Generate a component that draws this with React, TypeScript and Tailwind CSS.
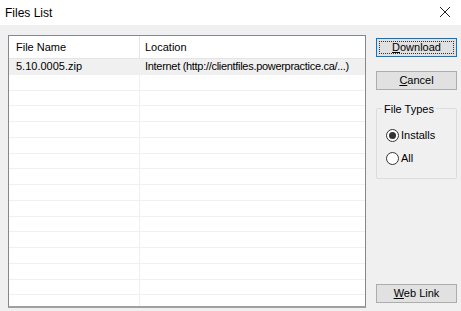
import React, { useState } from "react";

const rows = [
  { name: "5.10.0005.zip", location: "Internet (http://clientfiles.powerpractice.ca/...)" },
];

const EMPTY_ROWS = 15;

function Radio({ checked, label, onClick }: { checked: boolean; label: string; onClick: () => void }) {
  return (
    <div className="flex items-center gap-[2px] h-[23px] cursor-default" onClick={onClick}>
      <span className="w-[13px] h-[13px] rounded-full border border-[#333] bg-white flex items-center justify-center">
        {checked && <span className="w-[7px] h-[7px] rounded-full bg-[#333]" />}
      </span>
      <span>{label}</span>
    </div>
  );
}

export default function App() {
  const [fileType, setFileType] = useState<"installs" | "all">("installs");

  return (
    <div
      className="w-[461px] h-[311px] bg-[#f0f0f0] text-[11px] text-black flex flex-col overflow-hidden"
      style={{ fontFamily: "'Liberation Sans', Arial, sans-serif" }}
    >
      {/* title bar */}
      <div className="h-[25px] bg-white flex items-center justify-between pl-[5px] pr-[8px] shrink-0">
        <span className="text-[12px]">Files List</span>
        <svg width="12" height="12" viewBox="0 0 12 12" className="mr-[2px] -mt-[2px]">
          <path d="M1 1L11 11M11 1L1 11" stroke="#222" strokeWidth="1" fill="none" />
        </svg>
      </div>

      <div className="flex flex-1 pt-[10px] pl-[8px] pr-[4px] pb-[4px]">
        {/* list */}
        <div className="w-[358px] h-[273px] bg-white border border-[#828790] border-b-[2px] border-b-[#a0a0a0] flex flex-col overflow-hidden">
          <div className="flex h-[23px] shrink-0 items-center border-b border-[#e5e5e5]">
            <div className="w-[131px] shrink-0 pl-[7px] h-full flex items-center border-r border-[#e5e5e5]">File Name</div>
            <div className="pl-[5px]">Location</div>
          </div>
          {rows.map((r) => (
            <div key={r.name} className="flex h-[15.75px] shrink-0 items-center bg-[#f0f0f0] border-b border-[#f0f0f0]">
              <div className="w-[131px] shrink-0 pl-[7px] h-full flex items-center">{r.name}</div>
              <div className="pl-[5px] whitespace-nowrap tracking-[-0.3px]">{r.location}</div>
            </div>
          ))}
          {Array.from({ length: EMPTY_ROWS }).map((_, i) => (
            <div key={i} className="flex h-[15.75px] shrink-0 border-b border-[#f0f0f0]">
              <div className="w-[131px] shrink-0 h-full border-r border-[#f0f0f0]" />
              <div className="flex-1" />
            </div>
          ))}
        </div>

        {/* side panel */}
        <div className="flex-1 flex flex-col pl-[10px] pt-[3px]">
          <button className="w-[81px] h-[19px] bg-[#e1e1e1] border border-[#0078d7] p-[2px] flex">
            <span className="flex-1 border border-dotted border-[#333] flex items-center justify-center leading-none">
              <span>
                <span className="underline">D</span>ownload
              </span>
            </span>
          </button>
          <button className="w-[81px] h-[19px] mt-[14px] bg-[#e1e1e1] border border-[#adadad] flex items-center justify-center leading-none">
            <span>
              <span className="underline">C</span>ancel
            </span>
          </button>

          <div className="relative w-[81px] h-[71px] mt-[18px] border border-[#dcdcdc] rounded-[2px] pt-[15px] pl-[9px]">
            <span className="absolute -top-[8px] left-[5px] px-[2px] bg-[#f0f0f0]">File Types</span>
            <Radio checked={fileType === "installs"} label="Installs" onClick={() => setFileType("installs")} />
            <Radio checked={fileType === "all"} label="All" onClick={() => setFileType("all")} />
          </div>

          <div className="flex-1" />
          <button className="w-[81px] h-[19px] mb-[5px] bg-[#e1e1e1] border border-[#adadad] flex items-center justify-center leading-none">
            <span>
              <span className="underline">W</span>eb Link
            </span>
          </button>
        </div>
      </div>
    </div>
  );
}
